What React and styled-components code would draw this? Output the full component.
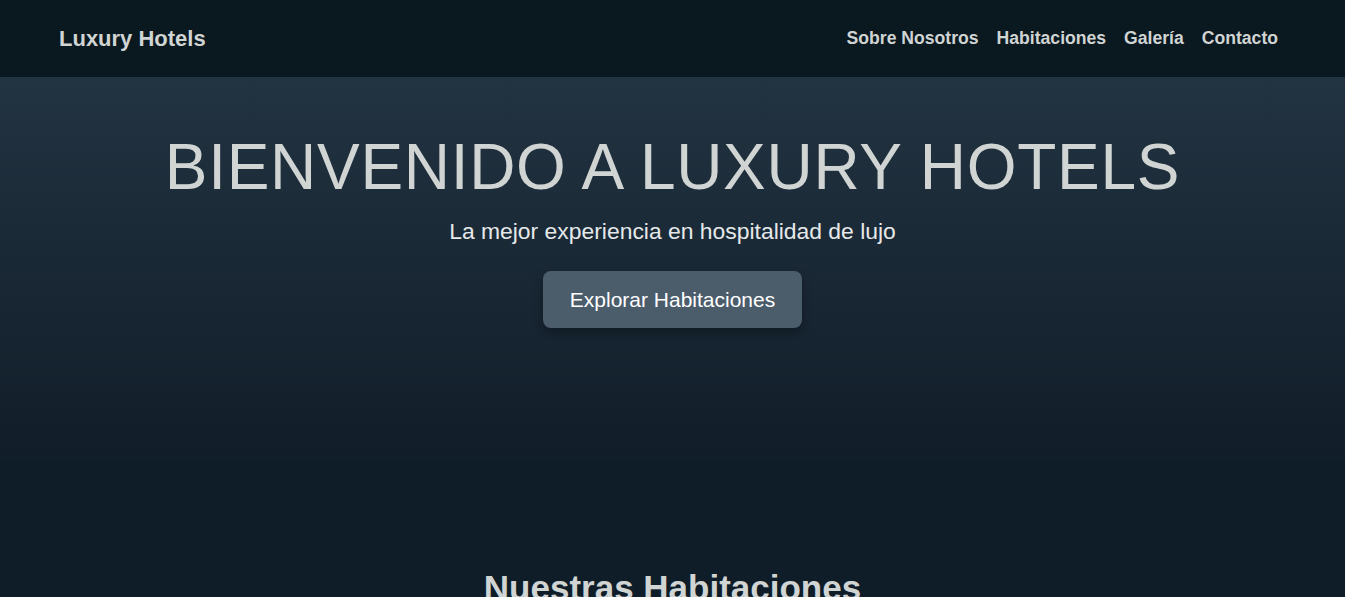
import React from 'react';
import styled, { createGlobalStyle } from 'styled-components';

const GlobalStyle = createGlobalStyle`
  * { box-sizing: border-box; }
  body {
    margin: 0;
    font-family: "Liberation Sans", Arial, sans-serif;
    background: #0f1d28;
    color: #d0d4d3;
  }
`;

const Header = styled.header`
  height: 77px;
  background: #0a1820;
  display: flex;
  align-items: center;
  justify-content: space-between;
  padding: 0 67px 0 59px;
`;

const Logo = styled.div`
  font-size: 22px;
  font-weight: 700;
  color: #d0d4d3;
`;

const Nav = styled.nav`
  display: flex;
  gap: 18px;
`;

const NavLink = styled.a`
  font-size: 17.6px;
  font-weight: 700;
  color: #d0d4d3;
  text-decoration: none;
`;

const Hero = styled.section`
  height: 383px;
  background: linear-gradient(180deg, #223341 0%, #111d29 100%);
  display: flex;
  flex-direction: column;
  align-items: center;
  padding-top: 53px;
  text-align: center;
`;

const Title = styled.h1`
  margin: 0;
  font-size: 64px;
  font-weight: 400;
  letter-spacing: 0.7px;
  color: #d0d4d3;
`;

const Subtitle = styled.p`
  margin: 14px 0 0;
  font-size: 22.9px;
  color: #e6e9ea;
`;

const Button = styled.button`
  margin-top: 26px;
  padding: 0 27px;
  height: 57px;
  border: none;
  border-radius: 8px;
  background: #4b5c6b;
  color: #ffffff;
  font-family: inherit;
  font-size: 21px;
  box-shadow: 0 4px 10px rgba(0, 0, 0, 0.3);
  cursor: pointer;
`;

const Section = styled.section`
  padding-top: 108px;
  text-align: center;
`;

const SectionTitle = styled.h2`
  margin: 0;
  font-size: 35px;
  font-weight: 700;
  color: #d0d4d3;
`;

const links = ['Sobre Nosotros', 'Habitaciones', 'Galería', 'Contacto'];

export default function App() {
  return (
    <>
      <GlobalStyle />
      <Header>
        <Logo>Luxury Hotels</Logo>
        <Nav>
          {links.map((l) => (
            <NavLink key={l} href="#">{l}</NavLink>
          ))}
        </Nav>
      </Header>
      <Hero>
        <Title>BIENVENIDO A LUXURY HOTELS</Title>
        <Subtitle>La mejor experiencia en hospitalidad de lujo</Subtitle>
        <Button>Explorar Habitaciones</Button>
      </Hero>
      <Section>
        <SectionTitle>Nuestras Habitaciones</SectionTitle>
      </Section>
    </>
  );
}
